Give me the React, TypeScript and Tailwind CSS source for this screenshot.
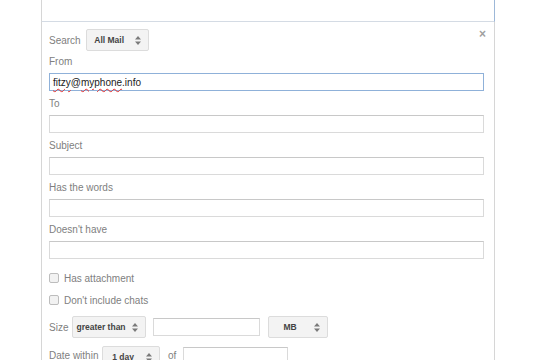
const font = { fontFamily: '"Liberation Sans", Arial, sans-serif' };

function Arrows() {
  return (
    <svg width="6" height="9" viewBox="0 0 6 9" className="shrink-0">
      <path d="M3 0L6 3.5H0Z M0 5.5H6L3 9Z" fill="#7a7a7a" />
    </svg>
  );
}

function Select({ label, className }: { label: string; className: string }) {
  return (
    <div
      className={`flex h-[22px] items-center rounded-[2px] border border-[#dcdcdc] bg-[#f3f3f3] pr-[4px] ${className}`}
    >
      <span className="flex-1 text-center text-[8.5px] font-bold text-[#444]">{label}</span>
      <span className="flex w-[12px] justify-center">
        <Arrows />
      </span>
    </div>
  );
}

function Field({ label, mt }: { label: string; mt: string }) {
  return (
    <div className={mt}>
      <div className="h-[14px] text-[10px] leading-[14px] text-[#808080]">{label}</div>
      <div className="mt-[4px] h-[18px] w-[435px] border border-[#dadada] border-t-[#c8c8c8] bg-white" />
    </div>
  );
}

function Check({ label, mt }: { label: string; mt: string }) {
  return (
    <div className={`flex h-[14px] items-center gap-[5px] ${mt}`}>
      <div className="h-[10px] w-[10px] rounded-[2px] border border-[#bdbdbd] bg-[#f2f2f2]" />
      <span className="text-[10px] text-[#808080]">{label}</span>
    </div>
  );
}

export default function App() {
  return (
    <div className="h-[360px] w-[537px] overflow-hidden bg-white" style={font}>
      <div className="ml-[41px] w-[454px]">
        <div className="h-[22px] border-b border-l border-r border-b-[#d4dbe4] border-l-[#d6d6d6] border-r-[#9db8d8] bg-white" />
        <div className="relative h-[338px] border-l border-r border-[#d6d6d6] pl-[7px] pt-[7px]">
          <span className="absolute right-[8px] top-[3px] text-[12px] font-bold text-[#a0a0a0]">×</span>

          <div className="flex items-center gap-[5px]">
            <span className="text-[10px] text-[#808080]">Search</span>
            <Select label="All Mail" className="w-[63px]" />
          </div>

          <div className="mt-[4px]">
            <div className="h-[14px] text-[10px] leading-[14px] text-[#808080]">From</div>
            <div className="mt-[4px] flex h-[18px] w-[435px] items-center border border-[#8fb1d9] bg-white pl-[3px] text-[10px] text-[#222]">
              <span className="underline decoration-[#e03030] decoration-wavy decoration-1 underline-offset-2">fitzy</span>
              <span>@</span>
              <span className="underline decoration-[#e03030] decoration-wavy decoration-1 underline-offset-2">myphone</span>
              <span>.info</span>
            </div>
          </div>

          <Field label="To" mt="mt-[6px]" />
          <Field label="Subject" mt="mt-[6px]" />
          <Field label="Has the words" mt="mt-[6px]" />
          <Field label="Doesn't have" mt="mt-[6px]" />

          <Check label="Has attachment" mt="mt-[12px]" />
          <Check label="Don't include chats" mt="mt-[8px]" />

          <div className="mt-[9px] flex items-center">
            <span className="w-[23px] text-[10px] text-[#808080]">Size</span>
            <Select label="greater than" className="w-[74px]" />
            <div className="ml-[7px] h-[18px] w-[107px] border border-[#dadada] border-t-[#c8c8c8] bg-white" />
            <Select label="MB" className="ml-[8px] w-[60px]" />
          </div>

          <div className="mt-[8px] flex items-start">
            <span className="mt-[2px] w-[53px] text-[10px] text-[#808080]">Date within</span>
            <Select label="1 day" className="w-[58px]" />
            <span className="ml-[8px] mt-[2px] w-[15px] text-[10px] text-[#808080]">of</span>
            <div className="mt-[1px] h-[18px] w-[105px] border border-[#dadada] border-t-[#c8c8c8] bg-white" />
          </div>
        </div>
      </div>
    </div>
  );
}
